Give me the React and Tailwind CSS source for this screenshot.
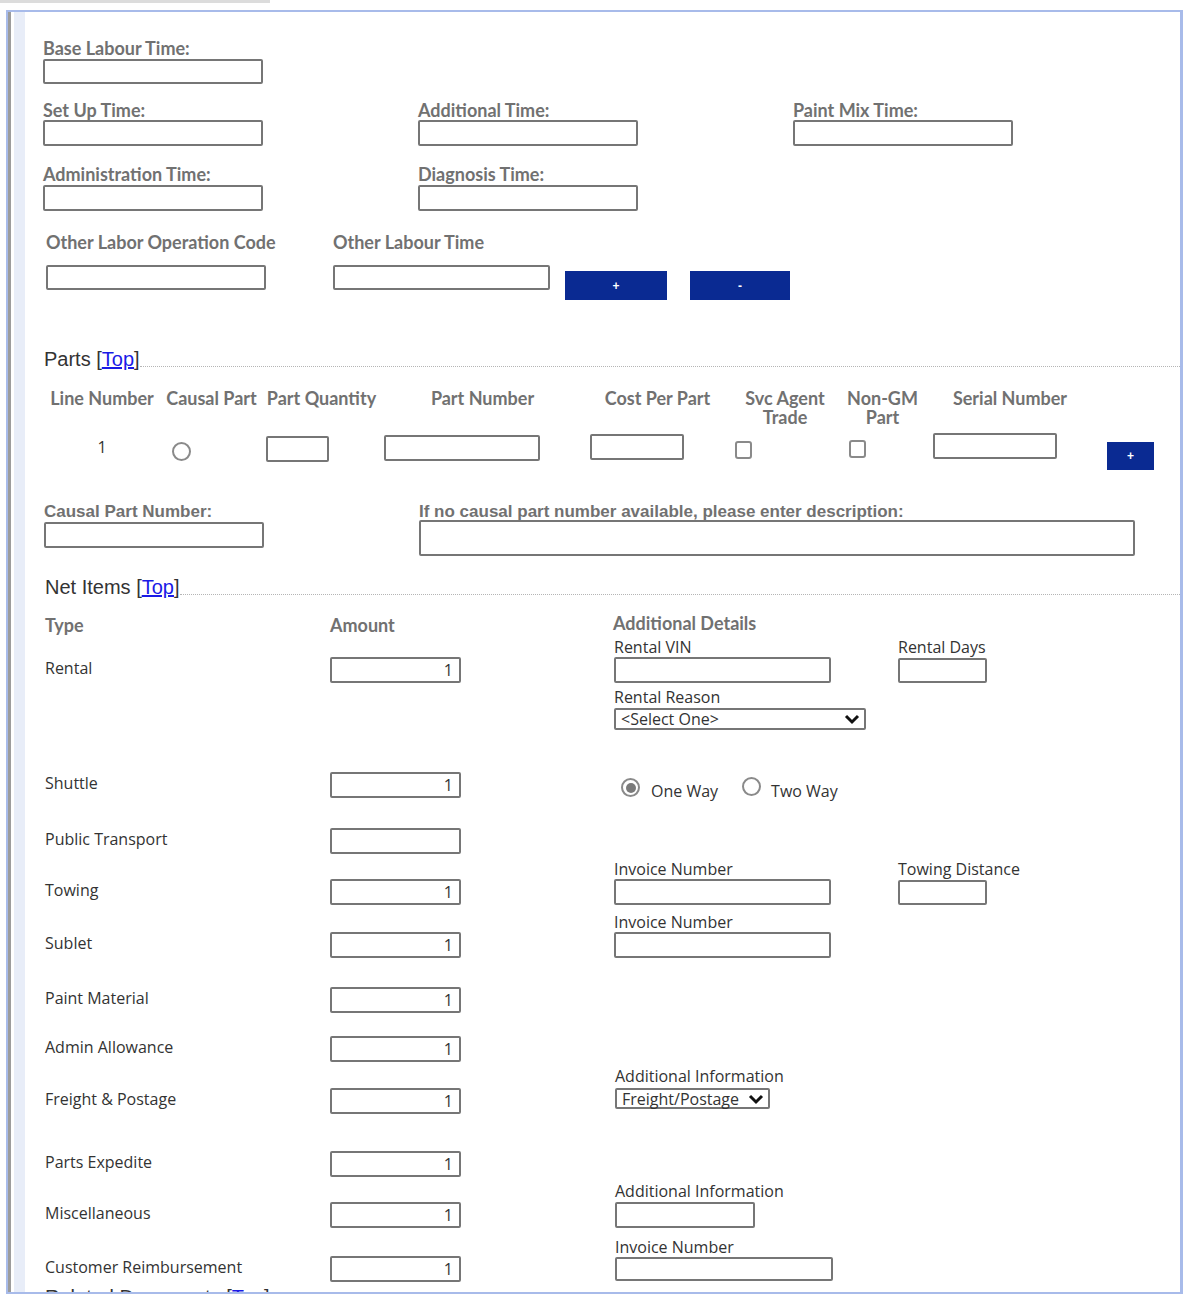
import React from 'react'

const lbl = "font-['Lato',sans-serif] font-bold text-[18px] leading-[18px] text-[#717171] whitespace-nowrap"
const lbl2 = "font-['Liberation_Sans',sans-serif] font-bold text-[17px] text-[#717171] whitespace-nowrap"
const txt = "font-['Open_Sans',sans-serif] text-[16px] leading-[18px] text-[#333] whitespace-nowrap"
const box = 'block border-2 border-[#767676] rounded-[2px] bg-white'
const btn = 'flex items-center justify-center bg-[#0a2a92] text-white text-[12px] font-bold font-["Liberation_Sans",sans-serif]'

function Box({ className = '', value }) {
  return (
    <div className={`${box} ${className} flex items-center justify-end pr-[6px] ${txt} text-[15px]`}>
      {value}
    </div>
  )
}

function Field({ label, className = '', inputClass = 'w-[220px] h-[26px]', gap = 'mt-[1px]' }) {
  return (
    <div className={className}>
      <div className={lbl}>{label}</div>
      <Box className={`${inputClass} ${gap}`} />
    </div>
  )
}

function SectionHead({ title, className = '' }) {
  return (
    <div className={`flex items-end ${className}`}>
      <div className="font-['Liberation_Sans',sans-serif] text-[20px] leading-[22px] text-[#333] whitespace-nowrap">
        {title} <span>[<a href="#top" className="text-[#1a1ae6] underline">Top</a>]</span>
      </div>
      <div className="flex-1 border-b border-dotted border-[#b5b5b5] mb-[3px]" />
    </div>
  )
}

function Select({ text, className }) {
  return (
    <div className={`${box} ${className} flex items-center justify-between pl-[5px] pr-[4px] ${txt} text-[#222]`}>
      <span>{text}</span>
      <svg width="16" height="12" viewBox="0 0 16 12">
        <path d="M2 3l6 6 6-6" fill="none" stroke="#111" strokeWidth="3" />
      </svg>
    </div>
  )
}

function Radio({ checked }) {
  return (
    <div className="w-[19px] h-[19px] rounded-full border-2 border-[#8a8a8a] bg-white flex items-center justify-center">
      {checked && <div className="w-[10px] h-[10px] rounded-full bg-[#7a7a7a]" />}
    </div>
  )
}

function Check() {
  return <div className="w-[17px] h-[18px] rounded-[3px] border-2 border-[#8a8a8a] bg-white" />
}

function NetRow({ label, value = '1', className = '', offset = '', right, extra }) {
  return (
    <div className={`grid grid-cols-[288px_283px_285px_auto] ${className}`}>
      <div className={`h-[22px] flex items-center pl-[3px] ${txt} ${offset}`}>{label}</div>
      <div className={offset}>
        <Box className="w-[131px] h-[26px]" value={value} />
      </div>
      <div className="pl-[1px]">{right}</div>
      <div>{extra}</div>
    </div>
  )
}

function SmallLabel({ children, className = '' }) {
  return <div className={`${txt} ${className}`}>{children}</div>
}

export default function App() {
  return (
    <div className="w-[1200px] h-[1315px] bg-white overflow-hidden">
      <div className="h-[3px] w-[270px] bg-[#dcdcdc]" />
      <div className="ml-[6px] mt-[7px] w-[1177px] h-[1284px] border-t-2 border-b-2 border-l-2 border-r-[3px] border-[#a8bbea] flex overflow-hidden">
        <div className="w-[3px] bg-[#9c9c9c]" />
        <div className="w-[3px] bg-white" />
        <div className="w-[11px] bg-[#e8edf8]" />
        <div className="flex-1 pl-[17px]">
          {/* labour times */}
          <Field label="Base Labour Time:" className="mt-[27px] pl-[1px]" inputClass="w-[220px] h-[25px]" gap="mt-[2px]" />
          <div className="grid grid-cols-[376px_375px_auto] mt-[17px]">
            <Field label="Set Up Time:" className="pl-[1px]" />
            <Field label="Additional Time:" />
            <Field label="Paint Mix Time:" />
          </div>
          <div className="grid grid-cols-[376px_375px_auto] mt-[19px]">
            <Field label="Administration Time:" className="pl-[1px]" gap="mt-[2px]" />
            <Field label="Diagnosis Time:" gap="mt-[2px]" />
          </div>
          <div className="flex items-start mt-[22px]">
            <Field label="Other Labor Operation Code" className="w-[291px] pl-[4px]" inputClass="w-[220px] h-[25px]" gap="mt-[14px]" />
            <Field label="Other Labour Time" className="w-[232px]" inputClass="w-[217px] h-[25px]" gap="mt-[14px]" />
            <button className={`${btn} w-[102px] h-[29px] mt-[38px]`}>+</button>
            <button className={`${btn} w-[100px] h-[29px] mt-[38px] ml-[23px]`}>-</button>
          </div>

          {/* parts */}
          <SectionHead title="Parts" className="mt-[48px] pl-[2px]" />
          <div className="ml-[2px] grid grid-cols-[116px_103px_117px_205px_145px_110px_85px_170px_65px] mt-[19px] text-center font-['Lato',sans-serif] font-bold text-[18px] leading-[19px] text-[#717171]">
            <div>Line Number</div>
            <div>Causal Part</div>
            <div>Part Quantity</div>
            <div>Part Number</div>
            <div>Cost Per Part</div>
            <div>Svc Agent<br />Trade</div>
            <div>Non-GM<br />Part</div>
            <div>Serial Number</div>
            <div />
          </div>
          <div className="ml-[2px] grid grid-cols-[116px_103px_117px_205px_145px_110px_85px_170px_65px] mt-[6px] items-start">
            <div className={`${txt} text-[15px] text-center mt-[5px] text-[#3a2a2a]`}>1</div>
            <div className="mt-[9px] ml-[12px]"><Radio /></div>
            <div className="mt-[3px] ml-[3px]"><Box className="w-[63px] h-[26px]" /></div>
            <div className="mt-[2px] ml-[4px]"><Box className="w-[156px] h-[26px]" /></div>
            <div className="mt-[1px] ml-[5px]"><Box className="w-[94px] h-[26px]" /></div>
            <div className="mt-[8px] ml-[5px]"><Check /></div>
            <div className="mt-[7px] ml-[9px]"><Check /></div>
            <div className="ml-[8px]"><Box className="w-[124px] h-[26px]" /></div>
            <div className="mt-[9px] ml-[12px]">
              <button className={`${btn} w-[47px] h-[28px]`}>+</button>
            </div>
          </div>
          <div className="flex items-start mt-[33px]">
            <div className="w-[377px] pl-[2px]">
              <div className={`${lbl2} leading-[18px]`}>Causal Part Number:</div>
              <Box className="w-[220px] h-[26px] mt-[1px]" />
            </div>
            <div>
              <div className={`${lbl2} leading-[17px]`}>
                If no causal part number available, please enter description:
              </div>
              <Box className="w-[716px] h-[36px]" />
            </div>
          </div>

          {/* net items */}
          <SectionHead title="Net Items" className="mt-[20px] pl-[3px]" />
          <div className="grid grid-cols-[288px_283px_auto] mt-[18px]">
            <div className={`${lbl} pl-[3px]`}>Type</div>
            <div className={lbl}>Amount</div>
            <div className={`${lbl} -mt-[2px]`}>Additional Details</div>
          </div>

          <NetRow
            label="Rental"
            className="mt-[4px]"
            offset="mt-[19px]"
            right={
              <>
                <SmallLabel>Rental VIN</SmallLabel>
                <Box className="w-[217px] h-[26px] mt-[1px]" />
                <SmallLabel className="mt-[5px]">Rental Reason</SmallLabel>
                <Select text="<Select One>" className="w-[252px] h-[22px] mt-[2px]" />
              </>
            }
            extra={
              <>
                <SmallLabel>Rental Days</SmallLabel>
                <Box className="w-[89px] h-[25px] mt-[2px]" />
              </>
            }
          />
          <NetRow
            label="Shuttle"
            className="mt-[42px]"
            right={
              <div className={`flex items-start h-[26px] pl-[7px] ${txt}`}>
                <span className="mt-[6px]"><Radio checked /></span>
                <span className="ml-[11px] mt-[10px]">One Way</span>
                <span className="ml-[24px] mt-[5px]"><Radio /></span>
                <span className="ml-[10px] mt-[10px]">Two Way</span>
              </div>
            }
          />
          <NetRow label="Public Transport" value="" className="mt-[30px]" />
          <NetRow
            label="Towing"
            className="mt-[6px]"
            offset="mt-[19px]"
            right={
              <>
                <SmallLabel>Invoice Number</SmallLabel>
                <Box className="w-[217px] h-[26px] mt-[1px]" />
              </>
            }
            extra={
              <>
                <SmallLabel>Towing Distance</SmallLabel>
                <Box className="w-[89px] h-[25px] mt-[2px]" />
              </>
            }
          />
          <NetRow
            label="Sublet"
            className="mt-[8px]"
            offset="mt-[19px]"
            right={
              <>
                <SmallLabel>Invoice Number</SmallLabel>
                <Box className="w-[217px] h-[26px] mt-[1px]" />
              </>
            }
          />
          <NetRow label="Paint Material" className="mt-[29px]" />
          <NetRow label="Admin Allowance" className="mt-[23px]" />
          <NetRow
            label="Freight & Postage"
            className="mt-[5px]"
            offset="mt-[21px]"
            right={
              <div className="pl-[1px]">
                <SmallLabel>Additional Information</SmallLabel>
                <Select text="Freight/Postage" className="w-[155px] h-[21px] mt-[3px]" />
              </div>
            }
          />
          <NetRow label="Parts Expedite" className="mt-[37px]" />
          <NetRow
            label="Miscellaneous"
            className="mt-[5px]"
            offset="mt-[20px]"
            right={
              <div className="pl-[1px]">
                <SmallLabel>Additional Information</SmallLabel>
                <Box className="w-[140px] h-[26px] mt-[2px]" />
              </div>
            }
          />
          <NetRow
            label="Customer Reimbursement"
            className="mt-[10px]"
            offset="mt-[18px]"
            right={
              <div className="pl-[1px]">
                <SmallLabel>Invoice Number</SmallLabel>
                <Box className="w-[218px] h-[24px] mt-[1px]" />
              </div>
            }
          />
          <SectionHead title="Related Documents" className="mt-[4px] pl-[3px]" />
        </div>
      </div>
    </div>
  )
}
